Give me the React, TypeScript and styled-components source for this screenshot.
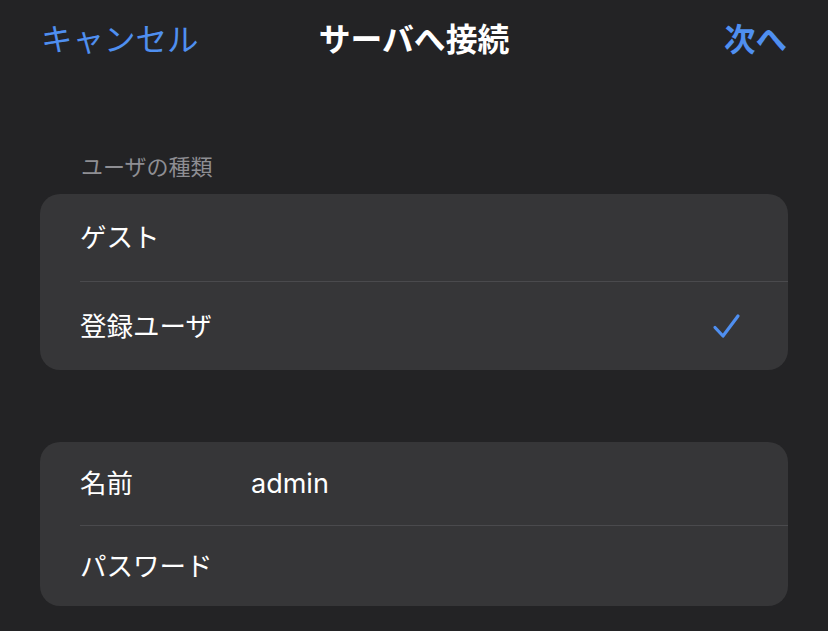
import React from "react";
import styled, { createGlobalStyle } from "styled-components";

const Global = createGlobalStyle`
  html, body { margin: 0; padding: 0; background: #232325; }
  body { font-family: Inter, "Noto Sans CJK JP", sans-serif; -webkit-font-smoothing: antialiased; }
`;

const Page = styled.div`
  width: 828px;
  height: 631px;
  background: #232325;
  overflow: hidden;
  font-family: Inter, "Noto Sans CJK JP", sans-serif;
`;

const NavBar = styled.div`
  height: 80px;
  padding: 0 41px;
  display: grid;
  grid-template-columns: 1fr auto 1fr;
  align-items: center;
`;

const NavButton = styled.div<{ $align: "left" | "right"; $bold?: boolean }>`
  color: #4f8ff0;
  font-size: 31.5px;
  font-weight: ${(p) => (p.$bold ? 600 : 400)};
  justify-self: ${(p) => (p.$align === "left" ? "start" : "end")};
  line-height: 1;
`;

const Title = styled.div`
  color: #ffffff;
  font-size: 31.8px;
  font-weight: 700;
  line-height: 1;
`;

const Content = styled.div`
  padding: 74px 40px 0;
  display: flex;
  flex-direction: column;
`;

const SectionHeader = styled.div`
  color: #8e8e93;
  font-size: 22px;
  line-height: 26px;
  padding-left: 41px;
  margin-bottom: 14px;
`;

const Card = styled.div<{ $gap?: number }>`
  background: #363638;
  border-radius: 20px;
  overflow: hidden;
  margin-top: ${(p) => p.$gap ?? 0}px;
`;

const Row = styled.div<{ $height: number; $divider?: boolean }>`
  height: ${(p) => p.$height}px;
  margin-left: 40px;
  padding-right: 40px;
  display: flex;
  align-items: center;
  border-top: ${(p) => (p.$divider ? "1px solid #4a4a4d" : "none")};
  box-sizing: border-box;
`;

const Label = styled.div<{ $width?: number }>`
  color: #ffffff;
  font-size: 26.5px;
  line-height: 1;
  width: ${(p) => (p.$width ? `${p.$width}px` : "auto")};
  flex: ${(p) => (p.$width ? "none" : "1")};
`;

const Value = styled.div`
  color: #ffffff;
  font-size: 27px;
  line-height: 1;
  flex: 1;
`;

const Check = styled.svg`
  width: 30px;
  height: 30px;
  margin-right: 6px;
`;

export default function App() {
  return (
    <Page>
      <Global />
      <NavBar>
        <NavButton $align="left">キャンセル</NavButton>
        <Title>サーバへ接続</Title>
        <NavButton $align="right" $bold>
          次へ
        </NavButton>
      </NavBar>
      <Content>
        <SectionHeader>ユーザの種類</SectionHeader>
        <Card>
          <Row $height={87}>
            <Label>ゲスト</Label>
          </Row>
          <Row $height={89} $divider>
            <Label>登録ユーザ</Label>
            <Check viewBox="0 0 30 30" fill="none">
              <path
                d="M3 16.5 L11 25 L26 5"
                stroke="#4f8ff0"
                strokeWidth="3.2"
                strokeLinecap="round"
                strokeLinejoin="round"
              />
            </Check>
          </Row>
        </Card>
        <Card $gap={72}>
          <Row $height={83}>
            <Label $width={171}>名前</Label>
            <Value>admin</Value>
          </Row>
          <Row $height={81} $divider>
            <Label>パスワード</Label>
          </Row>
        </Card>
      </Content>
    </Page>
  );
}
